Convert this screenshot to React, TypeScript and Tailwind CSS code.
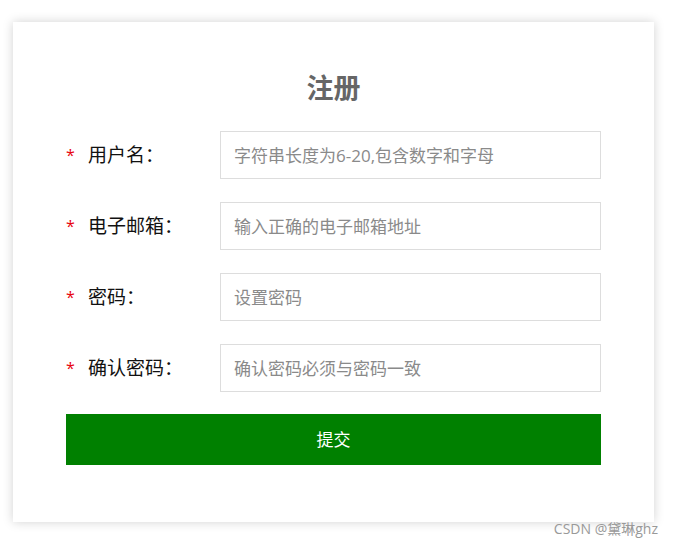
const fields = [
  { label: '用户名', placeholder: '字符串长度为6-20,包含数字和字母', type: 'text' },
  { label: '电子邮箱', placeholder: '输入正确的电子邮箱地址', type: 'email' },
  { label: '密码', placeholder: '设置密码', type: 'password' },
  { label: '确认密码', placeholder: '确认密码必须与密码一致', type: 'password' },
]

export default function App() {
  return (
    <div
      className="relative h-[546px] w-[674px] bg-white pl-[13px] pt-[22px]"
      style={{ fontFamily: '"Open Sans", "Noto Sans CJK SC", sans-serif' }}
    >
      <div className="w-[641px] bg-white px-[53px] pb-[57px] pt-[48px] shadow-[0_0_10px_rgba(0,0,0,0.18)]">
        <h1 className="text-center text-[27px] font-bold leading-[36px] text-[#666]">注册</h1>
        <form className="mt-[25px] flex flex-col gap-[23px]">
          {fields.map((f) => (
            <div key={f.label} className="flex items-center">
              <label className="flex w-[154px] shrink-0 items-center text-[19px] text-[#111]">
                <span className="w-[22px] text-[16px] text-red-600">*</span>
                {f.label}：
              </label>
              <input
                type="text"
                placeholder={f.placeholder}
                className="h-[48px] w-[381px] border border-[#ddd] bg-white px-[13px] text-[17px] text-[#333] outline-none placeholder:text-[#8a8a8a]"
              />
            </div>
          ))}
          <button
            type="button"
            className="mt-[-1px] h-[51px] w-full bg-[#008000] text-[17px] text-white"
          >
            提交
          </button>
        </form>
      </div>
      <div className="absolute bottom-[7px] right-[16px] text-[14px] text-[#999]">CSDN @黛琳ghz</div>
    </div>
  )
}
